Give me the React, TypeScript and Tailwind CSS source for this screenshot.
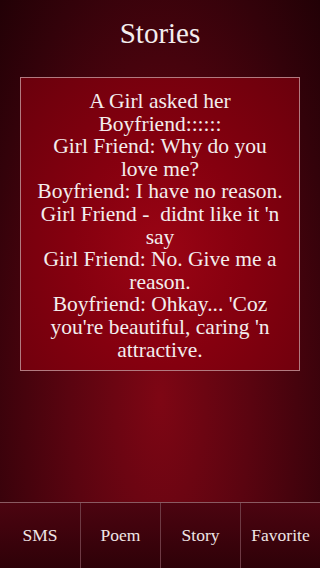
export default function App() {
    const tabs = ["SMS", "Poem", "Story", "Favorite"];
    const lines = [
        "A Girl asked her",
        "Boyfriend::::::",
        "Girl Friend: Why do you",
        "love me?",
        "Boyfriend: I have no reason.",
        "Girl Friend -\u00a0 didnt like it 'n",
        "say",
        "Girl Friend: No. Give me a",
        "reason.",
        "Boyfriend: Ohkay... 'Coz",
        "you're beautiful, caring 'n",
        "attractive.",
    ];
    return (
        <main className="h-[568px] w-[320px] flex flex-col overflow-hidden text-white font-['Liberation_Serif',serif] bg-[radial-gradient(ellipse_at_50%_70%,#7e0614_0%,#5a0410_40%,#33020a_80%,#220106_100%)]">
            <h1 className="h-[77px] pt-[15px] text-center text-[29px] leading-[36px] text-[#f4eeee]">Stories</h1>
            <section className="mx-[20px] h-[294px] border border-[#b27a80] bg-[radial-gradient(ellipse_at_50%_60%,#9a0414_0%,#85000f_45%,#6a000c_100%)] pt-[12px] text-center text-[21.5px] leading-[22.6px] text-[#f3eded]">
                {lines.map((l, i) => (
                    <div key={i} className="whitespace-pre">{l}</div>
                ))}
            </section>
            <div className="flex-1" />
            <nav className="h-[66px] grid grid-cols-4 border-t border-[#8a5a62] bg-[linear-gradient(#4c0410,#2e0108)]">
                {tabs.map((t, i) => (
                    <div key={t} className={`flex items-center justify-center text-[17.5px] text-[#efe6e6] ${i > 0 ? "border-l border-[#6e3a44]" : ""}`}>
                        {t}
                    </div>
                ))}
            </nav>
        </main>
    );
}
